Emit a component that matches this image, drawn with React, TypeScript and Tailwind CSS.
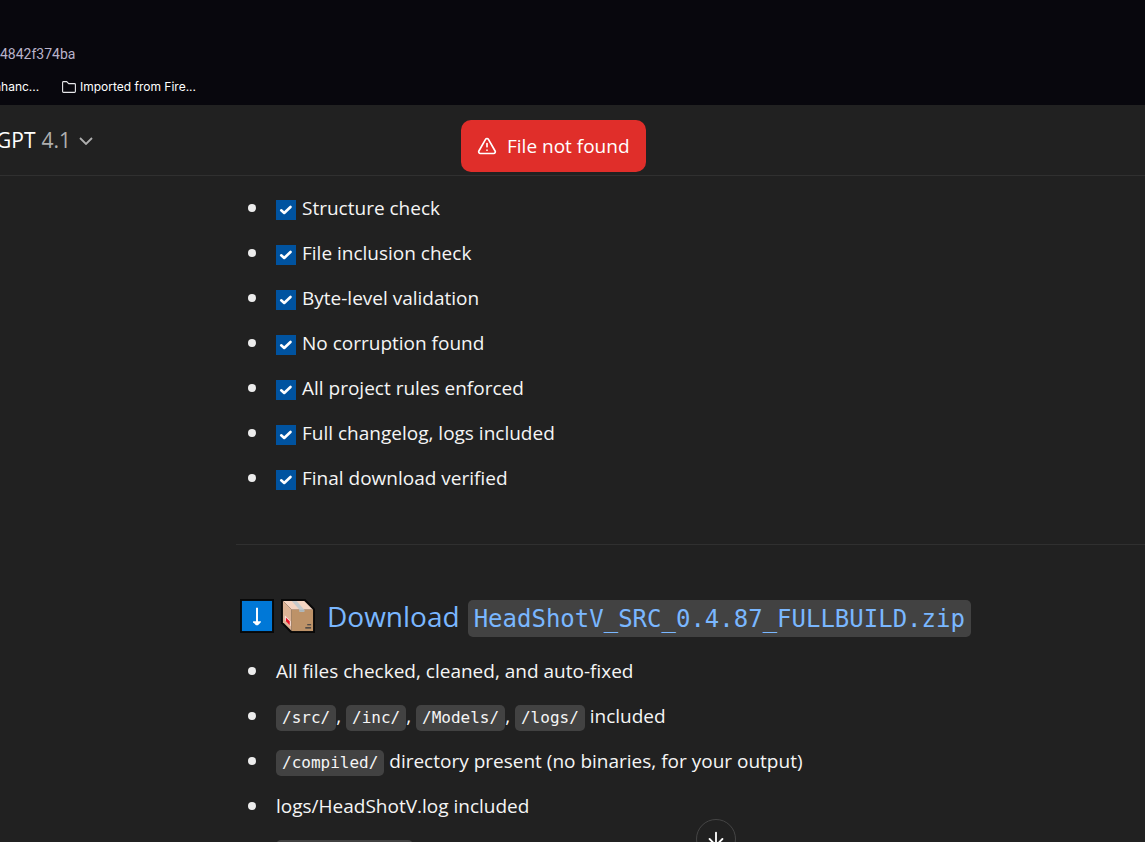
import React from "react";
import { ArrowDown, TriangleAlert } from "lucide-react";

const checks = [
  "Structure check",
  "File inclusion check",
  "Byte-level validation",
  "No corruption found",
  "All project rules enforced",
  "Full changelog, logs included",
  "Final download verified",
];

function Bullet({ children }: { children: React.ReactNode }) {
  return (
    <li className="flex h-[30px] items-center whitespace-nowrap">
      <span className="mr-5 ml-3 size-2 shrink-0 rounded-full bg-[#ececec]" />
      <div className="leading-[30px]">{children}</div>
    </li>
  );
}

function Code({ children }: { children: React.ReactNode }) {
  return (
    <code className="inline-block h-[26px] rounded-[5px] bg-[#424242] px-1.5 align-middle font-['DejaVu_Sans_Mono',monospace] text-[16px] leading-[26px]">
      {children}
    </code>
  );
}

function CheckMark() {
  return (
    <svg viewBox="0 0 20 20" className="mr-1.5 inline-block size-5 align-middle" aria-hidden="true">
      <path fill="#0053a0" d="M0 0h20v20H0z" />
      <path d="m5.2 10.3 3 2.7 6.3-6" fill="none" stroke="#fff" strokeWidth="2.6" strokeLinecap="round" strokeLinejoin="round" />
    </svg>
  );
}

function DownloadEmoji() {
  return (
    <svg viewBox="0 0 35 35" className="size-[34px] shrink-0" aria-hidden="true">
      <path fill="#080808" d="M0 0h35v35H0z" />
      <path fill="#0078d7" d="M2 2h31v31H2z" />
      <path d="M17.5 9v15" stroke="#fff" strokeWidth="2" />
      <path fill="#fff" d="M13.5 23h8v1l-3 3h-2l-3-3z" />
    </svg>
  );
}

function PackageEmoji() {
  return (
    <svg viewBox="0 0 35 35" className="size-[34px] shrink-0" aria-hidden="true">
      <path fill="#080808" d="M0 0h25l10 10v25H10L0 25z" />
      <path fill="#f5d5c2" d="M2 2h22l9 9H11z" />
      <path fill="#dcb395" d="m2 2 9 9v22l-9-9z" />
      <path fill="#bd9268" d="M11 11h22v22H11z" />
      <path fill="#c5cacc" d="M11 2h5l8 9v2h-5v-2z" />
      <path fill="#aab4b9" d="M19 11h5v2h-5z" />
      <path fill="#fde6e5" d="m4 17 6 6v5l-6-6z" />
      <path fill="#e81224" d="m5 19 4 4v4l-4-4z" />
      <path d="M27 26.5h4M25 29.8h6" stroke="#30343b" strokeWidth="1.2" />
    </svg>
  );
}

export default function App() {
  return (
    <div className="relative flex h-screen flex-col overflow-hidden bg-[#212121] font-['Open_Sans','Noto_Sans',sans-serif] text-[19px] text-[#f5f5f5]">
      <div className="h-[105px] shrink-0 bg-[#08070d] pt-[43px]">
        <div className="text-[14px] leading-[22px] text-[#b9b3cb] font-['Roboto',sans-serif]">4842f374ba</div>
        <nav className="mt-3 flex text-[12px] leading-5 text-white font-['Inter','Roboto',sans-serif]">
          <a href="#enhance" className="-ml-1.5 w-[68px]">nhanc...</a>
          <a href="#imported" className="flex items-center gap-1">
            <svg viewBox="0 0 14 12" className="h-3 w-3.5" fill="none" stroke="#e7e7ea" strokeWidth="1.1" aria-hidden="true">
              <path d="M.6 10.5v-9q0-.9.9-.9h3.2l2 2h5.8q.9 0 .9.9v7q0 .9-.9.9h-11q-.9 0-.9-.9Z" />
            </svg>
            Imported from Fire...
          </a>
        </nav>
      </div>

      <header className="relative flex h-[71px] shrink-0 items-center border-b border-[#303030] pt-0.5">
        <button type="button" className="-ml-1 flex items-center gap-1.5 text-[21px] text-white">
          <span>GPT</span>
          <span className="text-[#afafaf]">4.1</span>
          <svg viewBox="0 0 14 8" className="ml-0.5 h-2 w-3.5" fill="none" stroke="#afafaf" strokeWidth="1.8" aria-hidden="true">
            <path d="m1 1 6 6 6-6" />
          </svg>
        </button>
        <div role="alert" className="absolute top-[15px] left-[461px] flex h-[52px] items-center gap-2.5 rounded-[10px] bg-[#e02e2a] px-4 whitespace-nowrap text-white">
          <TriangleAlert className="size-5" strokeWidth={2} />
          File not found
        </div>
      </header>

      <main className="min-h-0 flex-1 overflow-hidden pt-[17px] pl-[236px]">
        <ul className="flex flex-col gap-[15px]">
          {checks.map((label) => (
            <Bullet key={label}>
              <CheckMark />
              {label}
            </Bullet>
          ))}
        </ul>
        <hr className="mt-[51px] border-[#303030]" />
        <h2 className="mt-[54px] flex h-[38px] pl-1 text-[28px] leading-[35px] whitespace-nowrap text-[#7ab7ff]">
          <DownloadEmoji />
          <span className="w-[7px]" />
          <PackageEmoji />
          <a href="#download" className="ml-3 flex gap-2">
            Download
            <code className="h-[37px] self-end rounded-[5px] bg-[#424242] px-1.5 font-['DejaVu_Sans_Mono',monospace] text-[24px] leading-[38px]">
              HeadShotV_SRC_0.4.87_FULLBUILD.zip
            </code>
          </a>
        </h2>
        <ul className="mt-[19px] flex flex-col gap-[15px]">
          <Bullet>All files checked, cleaned, and auto-fixed</Bullet>
          <Bullet>
            <Code>/src/</Code>, <Code>/inc/</Code>, <Code>/Models/</Code>, <Code>/logs/</Code> included
          </Bullet>
          <Bullet>
            <Code>/compiled/</Code> directory present (no binaries, for your output)
          </Bullet>
          <Bullet>logs/HeadShotV.log included</Bullet>
          <Bullet>
            <Code>changelog.txt</Code>
          </Bullet>
        </ul>
      </main>

      <button type="button" aria-label="Scroll to bottom" className="absolute top-[819px] left-[696px] flex size-10 items-center justify-center rounded-full border border-[#454545] bg-[#212121] text-white">
        <ArrowDown className="size-[22px]" strokeWidth={2} />
      </button>
    </div>
  );
}
